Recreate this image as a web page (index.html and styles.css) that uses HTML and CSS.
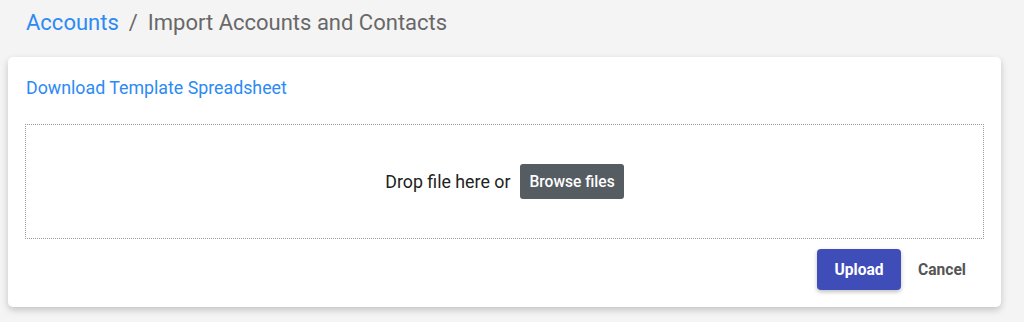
FILE: index.html
```html
<!DOCTYPE html>
<html>
<head>
    <title>Import Accounts and Contacts</title>
    <link rel="stylesheet" href="styles.css">
</head>
<body>
    <div class="breadcrumb">
        <a href="#" class="crumb-link">Accounts</a>
        <span class="crumb-sep">/</span>
        <span class="crumb-current">Import Accounts and Contacts</span>
    </div>

    <div class="import-card">
        <a href="#" class="template-link">Download Template Spreadsheet</a>

        <div class="drop-zone">
            <span class="drop-text">Drop file here or</span>
            <button type="button" class="browse-btn">Browse files</button>
        </div>

        <div class="card-actions">
            <button type="button" class="upload-btn">Upload</button>
            <button type="button" class="cancel-btn">Cancel</button>
        </div>
    </div>
</body>
</html>
```

FILE: styles.css
```css
* {
    margin: 0;
    padding: 0;
    box-sizing: border-box;
    font-family: 'Roboto', 'Liberation Sans', sans-serif;
}

body {
    background: #f4f4f4;
    padding: 8px 23px 0 8px;
    height: 322px;
    overflow: hidden;
}

.breadcrumb {
    display: flex;
    align-items: baseline;
    gap: 10px;
    padding-left: 18px;
    height: 49px;
    font-size: 22px;
    line-height: 30px;
}

.crumb-link {
    color: #2c8af5;
    text-decoration: none;
}

.crumb-sep,
.crumb-current {
    color: #686868;
}

.import-card {
    background: #fff;
    border-radius: 5px;
    box-shadow: 0 3px 7px rgba(0, 0, 0, 0.2);
    padding: 19px 17px 17px 17px;
    height: 250px;
}

.template-link {
    display: block;
    color: #2c8af5;
    text-decoration: none;
    font-size: 17.8px;
    line-height: 24px;
    margin-left: 1px;
}

.drop-zone {
    margin-top: 24px;
    height: 115px;
    border: 1px dotted #9a9a9a;
    display: flex;
    align-items: center;
    justify-content: center;
    gap: 10px;
}

.drop-text {
    font-size: 17.8px;
    color: #222;
}

.browse-btn {
    background: #555c62;
    color: #fff;
    border: none;
    border-radius: 3px;
    font-size: 15.6px;
    font-weight: 500;
    padding: 0 9px;
    height: 35px;
}

.card-actions {
    display: flex;
    justify-content: flex-end;
    align-items: center;
    gap: 0;
    margin-top: 10px;
}

.upload-btn {
    background: #3f4db9;
    color: #fff;
    border: none;
    border-radius: 4px;
    font-size: 15.6px;
    font-weight: 700;
    width: 84px;
    height: 41px;
    box-shadow: 0 2px 4px rgba(0, 0, 0, 0.25);
}

.cancel-btn {
    background: none;
    border: none;
    color: #555;
    font-size: 15.6px;
    font-weight: 700;
    padding: 0 18px 0 17px;
    height: 41px;
}
```
